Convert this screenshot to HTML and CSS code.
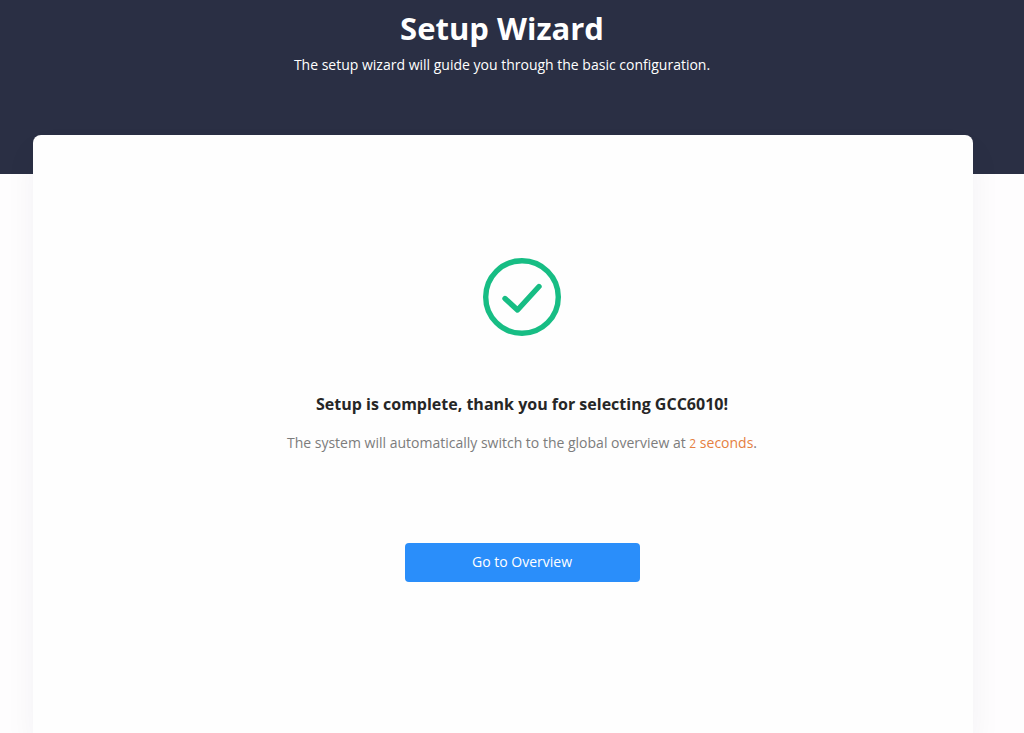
FILE: index.html
```html
<!DOCTYPE html>
<html lang="en">
<head>
    <meta charset="UTF-8">
    <meta name="viewport" content="width=device-width, initial-scale=1.0">
    <title>Setup Wizard</title>
    <link rel="stylesheet" href="styles.css">
</head>
<body>
    <header class="banner">
        <h1>Setup Wizard</h1>
        <p>The setup wizard will guide you through the basic configuration.</p>
    </header>
    <main class="card">
        <section class="result">
            <svg class="result-icon" xmlns="http://www.w3.org/2000/svg" viewBox="0 0 78 78" aria-hidden="true">
                <circle cx="39" cy="39" r="36.3"></circle>
                <polyline points="22 40.5 34.5 52 56 28.5"></polyline>
            </svg>
            <h2>Setup is complete, thank you for selecting GCC6010!</h2>
            <p>The system will automatically switch to the global overview at <span class="countdown"><small>2</small> seconds</span>.</p>
            <button type="button" class="overview-button">Go to Overview</button>
        </section>
    </main>
</body>
</html>
```

FILE: styles.css
```css
* {
    box-sizing: border-box;
}
body {
    margin: 0;
    min-height: 100vh;
    display: flex;
    flex-direction: column;
    font-family: "Open Sans", sans-serif;
    font-size: 14px;
    line-height: 20px;
    background-color: #fefdfe;
}
h1, h2, p {
    margin: 0;
}
.banner {
    height: 174px;
    padding: 8px 20px 0 0;
    text-align: center;
    color: white;
    background-color: #2a2f44;
}
.banner h1 {
    margin-bottom: 7px;
    font-size: 31px;
    line-height: 40px;
}
.card {
    flex: 1;
    margin: -39px 51px 0 33px;
    padding: 123px 0 80px 38px;
    border-radius: 8px 8px 0 0;
    background-color: #fefefe;
    box-shadow: 0 16px 32px rgba(41, 32, 66, 0.05);
}
.result {
    display: flex;
    flex-direction: column;
    align-items: center;
    text-align: center;
}
.result-icon {
    width: 78px;
    height: 78px;
    margin-bottom: 58px;
    fill: none;
    stroke: #17bd84;
    stroke-width: 5.4;
    stroke-linecap: round;
    stroke-linejoin: round;
}
.result h2 {
    margin-bottom: 19px;
    font-size: 16px;
    line-height: 20px;
    color: #262626;
}
.result p {
    color: #7c7c7c;
}
.countdown {
    color: #e5803f;
}
.countdown small {
    font-size: 12px;
}
.overview-button {
    width: 235px;
    height: 39px;
    margin-top: 89px;
    padding: 0 0 2px;
    border: none;
    border-radius: 4px;
    font: inherit;
    color: white;
    background-color: #2a8efa;
    cursor: pointer;
}
.overview-button:hover {
    background-color: #1c7fe8;
}
```
